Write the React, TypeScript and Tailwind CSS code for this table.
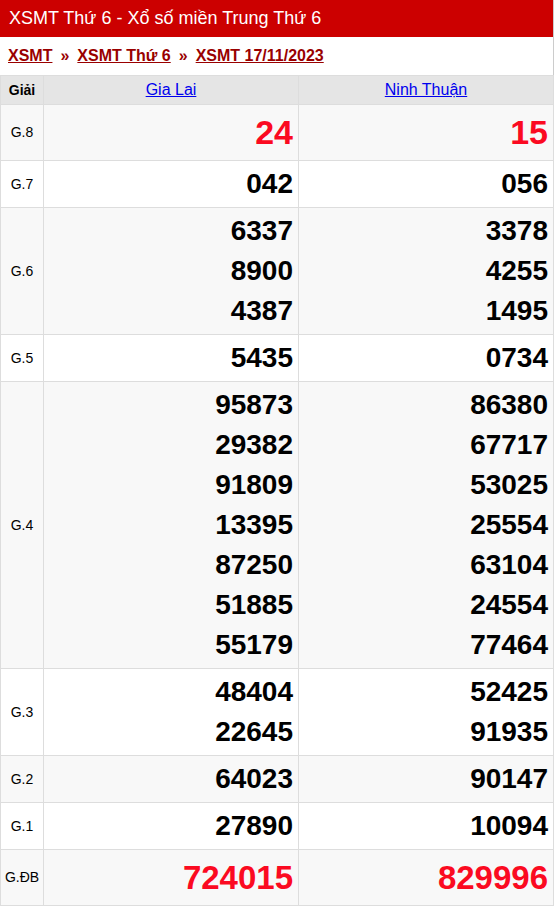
import React from "react";

type Row = { label: string; a: string[]; b: string[]; kind?: "g8" | "db" };

const rows: Row[] = [
  { label: "G.8", a: ["24"], b: ["15"], kind: "g8" },
  { label: "G.7", a: ["042"], b: ["056"] },
  { label: "G.6", a: ["6337", "8900", "4387"], b: ["3378", "4255", "1495"] },
  { label: "G.5", a: ["5435"], b: ["0734"] },
  {
    label: "G.4",
    a: ["95873", "29382", "91809", "13395", "87250", "51885", "55179"],
    b: ["86380", "67717", "53025", "25554", "63104", "24554", "77464"],
  },
  { label: "G.3", a: ["48404", "22645"], b: ["52425", "91935"] },
  { label: "G.2", a: ["64023"], b: ["90147"] },
  { label: "G.1", a: ["27890"], b: ["10094"] },
  { label: "G.ĐB", a: ["724015"], b: ["829996"], kind: "db" },
];

function Cell({ nums, kind }: { nums: string[]; kind?: "g8" | "db" }) {
  const cls =
    kind === "g8"
      ? "text-[34px] leading-[49px] font-bold text-[#fb0a21]"
      : kind === "db"
      ? "text-[33px] leading-[49px] font-bold text-[#fb0a21]"
      : "text-[28px] leading-[40px] font-bold text-black";
  return (
    <td className="border border-[#dddddd] py-[3px] pr-[5px] text-right align-middle">
      {nums.map((n) => (
        <div key={n} className={cls}>
          {n}
        </div>
      ))}
    </td>
  );
}

export default function App() {
  return (
    <div
      className="w-[554px] min-h-[906px] bg-white border-r border-[#cccccc] box-border"
      style={{ fontFamily: '"Liberation Sans", Arial, sans-serif' }}
    >
      <div className="h-[37px] bg-[#cc0000] flex items-center pl-[9px] text-white text-[18px]">
        XSMT Thứ 6 - Xổ số miền Trung Thứ 6
      </div>
      <div className="h-[38px] flex items-center pl-[8px] text-[16px] font-bold text-[#990000]">
        <a href="#" className="underline">XSMT</a>
        <span className="mx-[8px]">»</span>
        <a href="#" className="underline">XSMT Thứ 6</a>
        <span className="mx-[8px]">»</span>
        <a href="#" className="underline">XSMT 17/11/2023</a>
      </div>
      <table className="w-[553px] border-collapse table-fixed">
        <colgroup>
          <col className="w-[43px]" />
          <col className="w-[255px]" />
          <col className="w-[255px]" />
        </colgroup>
        <thead>
          <tr className="bg-[#e5e5e5] h-[29px]">
            <th className="border border-[#dddddd] text-[14px] font-bold text-black text-center p-0">Giải</th>
            <th className="border border-[#dddddd] text-[16px] font-normal text-center p-0">
              <a href="#" className="underline text-[#0000ee]">Gia Lai</a>
            </th>
            <th className="border border-[#dddddd] text-[16px] font-normal text-center p-0">
              <a href="#" className="underline text-[#0000ee]">Ninh Thuận</a>
            </th>
          </tr>
        </thead>
        <tbody>
          {rows.map((r, i) => (
            <tr key={r.label} className={i % 2 === 0 ? "bg-[#f8f8f8]" : "bg-white"}>
              <td className="border border-[#dddddd] text-center text-[14px] text-black align-middle p-0">
                {r.label}
              </td>
              <Cell nums={r.a} kind={r.kind} />
              <Cell nums={r.b} kind={r.kind} />
            </tr>
          ))}
        </tbody>
      </table>
    </div>
  );
}
